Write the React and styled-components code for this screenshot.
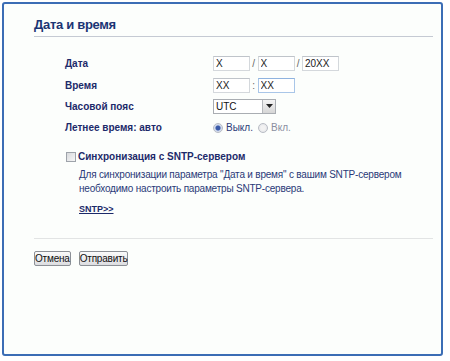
import React, { useState } from "react";
import styled, { createGlobalStyle } from "styled-components";

const GlobalStyle = createGlobalStyle`
  html, body {
    margin: 0;
    padding: 0;
    background: #ffffff;
  }
  body {
    font-family: "Liberation Sans", Arial, sans-serif;
  }
`;

const Frame = styled.div`
  box-sizing: border-box;
  margin: 2px;
  width: 441px;
  height: 354px;
  border: 2px solid #3b6db5;
  border-radius: 3px;
  background: #fcfefc;
  padding: 13px 8px 0 30px;
`;

const Title = styled.h1`
  margin: 0;
  font-size: 13px;
  line-height: 16px;
  font-weight: bold;
  letter-spacing: -0.3px;
  color: #1b3474;
  padding-bottom: 3px;
  border-bottom: 1px solid #c5cad3;
`;

const Form = styled.div`
  display: grid;
  grid-template-columns: 148px 1fr;
  grid-auto-rows: 21.4px;
  align-items: center;
  margin: 16px 0 0 31px;
`;

const Label = styled.div`
  font-size: 10px;
  font-weight: bold;
  color: #1c2a6a;
`;

const Controls = styled.div`
  display: flex;
  align-items: center;
  font-size: 10px;
  color: #555;
`;

const TextBox = styled.input`
  box-sizing: border-box;
  width: 37px;
  height: 15px;
  padding: 0 2px;
  margin: 0;
  border: 1px solid ${p => (p.$focus ? "#a9c6e8" : "#d4d8dc")};
  border-top-color: ${p => (p.$focus ? "#8fb3df" : "#bfc4ca")};
  background: #fff;
  font-family: "Liberation Sans", Arial, sans-serif;
  font-size: 10px;
  color: #222;
  outline: none;
`;

const Sep = styled.span`
  width: 7.5px;
  text-align: center;
  color: #666;
  font-size: 10px;
`;

const Select = styled.div`
  box-sizing: border-box;
  width: 63px;
  height: 15px;
  display: flex;
  align-items: center;
  justify-content: space-between;
  border: 1px solid #a9adb2;
  background: #fff;
  padding-left: 2px;
  font-size: 10px;
  color: #111;
`;

const SelectArrow = styled.span`
  box-sizing: border-box;
  width: 13px;
  height: 13px;
  display: flex;
  align-items: center;
  justify-content: center;
  background: linear-gradient(#f4f4f4, #d6d6d6);
  border-left: 1px solid #b5b8bc;
`;

const RadioGroup = styled.label`
  display: inline-flex;
  align-items: center;
  gap: 3px;
  margin-right: 5px;
  font-size: 10px;
  color: ${p => (p.$active ? "#2c3c78" : "#8a8fa0")};
`;

const RadioDot = styled.span`
  box-sizing: border-box;
  width: 10px;
  height: 10px;
  border-radius: 50%;
  border: 1px solid #b8bcc4;
  background: ${p =>
    p.$on
      ? "radial-gradient(circle, #3a5aa8 0 2px, #c9d4ea 3px, #eef1f6 5px)"
      : "radial-gradient(circle, #f2f2f2 0 2px, #e0e2e6 5px)"};
`;

const SyncRow = styled.div`
  display: flex;
  align-items: center;
  gap: 2px;
  margin: 11px 0 0 32px;
  height: 14px;
`;

const CheckBox = styled.span`
  box-sizing: border-box;
  width: 10px;
  height: 10px;
  border: 1px solid #9ea3aa;
  background: linear-gradient(135deg, #d8dadd, #f6f6f6);
`;

const SyncLabel = styled.span`
  font-size: 10px;
  font-weight: bold;
  color: #1c2a6a;
`;

const Note = styled.p`
  margin: 4px 0 0 45px;
  font-size: 10px;
  line-height: 14px;
  letter-spacing: -0.2px;
  color: #2a3a78;
`;

const Link = styled.a`
  display: block;
  margin: 8px 0 0 45px;
  font-size: 9px;
  font-weight: bold;
  color: #1c2a6a;
  text-decoration: underline;
`;

const Divider = styled.div`
  margin: 24px 0 0 0;
  border-top: 1px solid #e2e4e4;
`;

const Buttons = styled.div`
  display: flex;
  gap: 8px;
  margin-top: 12px;
`;

const Button = styled.button`
  box-sizing: border-box;
  height: 15px;
  padding: 0;
  margin: 0;
  border: 1px solid #8c9096;
  border-radius: 2px;
  background: linear-gradient(#fbfbfb, #dcdde0);
  font-family: "Liberation Sans", Arial, sans-serif;
  font-size: 10px;
  line-height: 13px;
  letter-spacing: -0.2px;
  color: #111;
`;

export default function App() {
  const [dst, setDst] = useState("off");

  return (
    <>
      <GlobalStyle />
      <Frame>
        <Title>Дата и время</Title>
        <Form>
          <Label>Дата</Label>
          <Controls>
            <TextBox defaultValue="X" />
            <Sep>/</Sep>
            <TextBox defaultValue="X" />
            <Sep>/</Sep>
            <TextBox defaultValue="20XX" />
          </Controls>

          <Label>Время</Label>
          <Controls>
            <TextBox defaultValue="XX" />
            <Sep>:</Sep>
            <TextBox defaultValue="XX" $focus />
          </Controls>

          <Label>Часовой пояс</Label>
          <Controls>
            <Select>
              UTC
              <SelectArrow>
                <svg width="7" height="4" viewBox="0 0 7 4">
                  <path d="M0 0h7L3.5 4z" fill="#222" />
                </svg>
              </SelectArrow>
            </Select>
          </Controls>

          <Label>Летнее время: авто</Label>
          <Controls>
            <RadioGroup $active onClick={() => setDst("off")}>
              <RadioDot $on={dst === "off"} />
              Выкл.
            </RadioGroup>
            <RadioGroup onClick={() => setDst("on")}>
              <RadioDot $on={dst === "on"} />
              Вкл.
            </RadioGroup>
          </Controls>
        </Form>

        <SyncRow>
          <CheckBox />
          <SyncLabel>Синхронизация с SNTP-сервером</SyncLabel>
        </SyncRow>
        <Note>
          Для синхронизации параметра "Дата и время" с вашим SNTP-сервером
          <br />
          необходимо настроить параметры SNTP-сервера.
        </Note>
        <Link href="#">SNTP&gt;&gt;</Link>

        <Divider />
        <Buttons>
          <Button>Отмена</Button>
          <Button>Отправить</Button>
        </Buttons>
      </Frame>
    </>
  );
}
